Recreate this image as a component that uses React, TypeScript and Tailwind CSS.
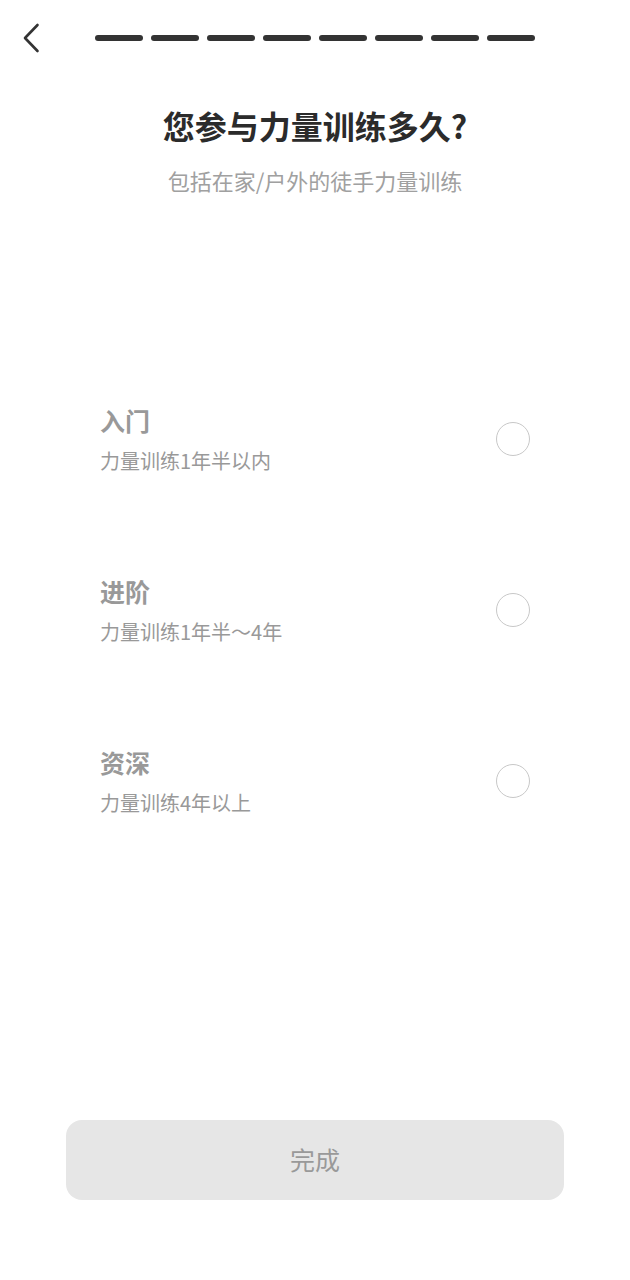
import React from 'react';

const options = [
  { title: '入门', desc: '力量训练1年半以内' },
  { title: '进阶', desc: '力量训练1年半～4年' },
  { title: '资深', desc: '力量训练4年以上' },
];

export default function App() {
  return (
    <div
      className="flex h-[1280px] w-[630px] flex-col bg-white"
      style={{ fontFamily: '"Noto Sans CJK SC", "Noto Sans", sans-serif' }}
    >
      {/* Header */}
      <div className="flex h-[75px] items-center pl-[22px]">
        <svg width="18" height="30" viewBox="0 0 18 30" fill="none">
          <path d="M15.5 2L3 15L15.5 28" stroke="#333" strokeWidth="2.6" strokeLinecap="round" strokeLinejoin="round" />
        </svg>
        <div className="ml-[55px] flex gap-[8px]">
          {Array.from({ length: 8 }).map((_, i) => (
            <div key={i} className="h-[6px] w-[48px] rounded-full bg-[#333333]" />
          ))}
        </div>
      </div>

      {/* Title */}
      <h1 className="mt-[30px] text-center text-[32px] font-bold leading-[40px] text-[#2b2b2b]">
        您参与力量训练多久?
      </h1>
      <p className="mt-[20px] text-center text-[22px] leading-[30px] text-[#a0a0a0]">
        包括在家/户外的徒手力量训练
      </p>

      {/* Options */}
      <div className="mt-[209px] flex flex-col">
        {options.map((o) => (
          <div key={o.title} className="flex h-[171px] items-start justify-between px-[100px]">
            <div className="flex h-[70px] w-full items-center justify-between">
              <div className="flex flex-col">
                <span className="text-[25px] font-bold leading-[32px] text-[#999999]">{o.title}</span>
                <span className="mt-[12px] text-[20px] leading-[26px] text-[#999999]">{o.desc}</span>
              </div>
              <div className="h-[34px] w-[34px] rounded-full border-[1.5px] border-[#c8c8c8]" />
            </div>
          </div>
        ))}
      </div>

      {/* Button */}
      <div className="mt-auto mb-[80px] px-[66px]">
        <button className="flex h-[80px] w-full items-center justify-center rounded-[16px] bg-[#e6e6e6] text-[25px] text-[#999999]">
          完成
        </button>
      </div>
    </div>
  );
}
